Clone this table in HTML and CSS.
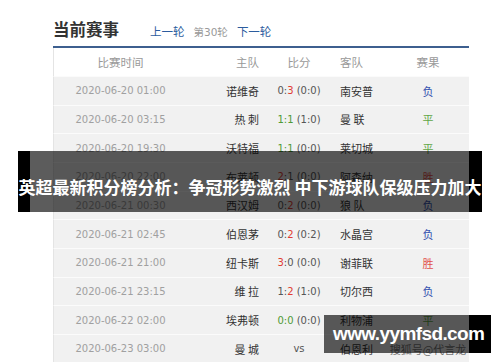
FILE: index.html
```html
<!DOCTYPE html>
<html lang="zh">
<head>
<meta charset="utf-8">
<link rel="stylesheet" href="styles.css">
</head>
<body>
<div class="page">
  <div class="head">
    <h2 class="title">当前赛事</h2>
    <nav class="rounds">
      <a class="link">上一轮</a>
      <span class="cur">第30轮</span>
      <a class="link">下一轮</a>
    </nav>
  </div>
  <div class="table">
    <div class="row thead">
      <div class="c-time">比赛时间</div>
      <div class="c-home">主队</div>
      <div class="c-score">比分</div>
      <div class="c-away">客队</div>
      <div class="c-res">赛果</div>
    </div>
    <div class="row">
      <div class="c-time">2020-06-20 01:00</div>
      <div class="c-home">诺维奇</div>
      <div class="c-score">0:<span class="r">3</span> (0:0)</div>
      <div class="c-away">南安普</div>
      <div class="c-res lose">负</div>
    </div>
    <div class="row">
      <div class="c-time">2020-06-20 03:15</div>
      <div class="c-home">热 刺</div>
      <div class="c-score"><span class="g">1:1</span> (1:0)</div>
      <div class="c-away">曼 联</div>
      <div class="c-res draw">平</div>
    </div>
    <div class="row">
      <div class="c-time">2020-06-20 19:30</div>
      <div class="c-home">沃特福</div>
      <div class="c-score"><span class="g">1:1</span> (0:0)</div>
      <div class="c-away">莱切城</div>
      <div class="c-res draw">平</div>
    </div>
    <div class="row">
      <div class="c-time">2020-06-20 22:00</div>
      <div class="c-home">布莱顿</div>
      <div class="c-score"><span class="r">2</span>:1 (0:0)</div>
      <div class="c-away">阿森纳</div>
      <div class="c-res win">胜</div>
    </div>
    <div class="row">
      <div class="c-time">2020-06-21 00:30</div>
      <div class="c-home">西汉姆</div>
      <div class="c-score">0:<span class="r">2</span> (0:0)</div>
      <div class="c-away">狼 队</div>
      <div class="c-res lose">负</div>
    </div>
    <div class="row">
      <div class="c-time">2020-06-21 02:45</div>
      <div class="c-home">伯恩茅</div>
      <div class="c-score">0:<span class="r">2</span> (0:2)</div>
      <div class="c-away">水晶宫</div>
      <div class="c-res lose">负</div>
    </div>
    <div class="row">
      <div class="c-time">2020-06-21 21:00</div>
      <div class="c-home">纽卡斯</div>
      <div class="c-score"><span class="r">3</span>:0 (0:0)</div>
      <div class="c-away">谢菲联</div>
      <div class="c-res win">胜</div>
    </div>
    <div class="row">
      <div class="c-time">2020-06-21 23:15</div>
      <div class="c-home">维 拉</div>
      <div class="c-score">1:<span class="r">2</span> (1:0)</div>
      <div class="c-away">切尔西</div>
      <div class="c-res lose">负</div>
    </div>
    <div class="row">
      <div class="c-time">2020-06-22 02:00</div>
      <div class="c-home">埃弗顿</div>
      <div class="c-score"><span class="g">0:0</span> (0:0)</div>
      <div class="c-away">利物浦</div>
      <div class="c-res draw">平</div>
    </div>
    <div class="row">
      <div class="c-time">2020-06-23 03:00</div>
      <div class="c-home">曼 城</div>
      <div class="c-score">vs</div>
      <div class="c-away">伯恩利</div>
      <div class="c-res mark">搜狐号@代言龙</div>
    </div>
  </div>
  <div class="banner">英超最新积分榜分析：争冠形势激烈 中下游球队保级压力加大</div>
  <div class="site">www.yymfsd.com</div>
</div>
</body>
</html>
```
FILE: styles.css
```css
html, body {
  margin: 0;
  padding: 0;
  background: #fff;
}
body {
  width: 500px;
  height: 362px;
  overflow: hidden;
  font-family: "DejaVu Sans", "Noto Sans CJK SC", sans-serif;
}
.page {
  position: relative;
  width: 500px;
  height: 362px;
  padding: 19px 0 0 53px;
  box-sizing: border-box;
}
.head {
  display: flex;
  align-items: baseline;
  height: 20px;
}
.title {
  margin: 0;
  font-family: "Noto Sans CJK SC", sans-serif;
  font-size: 16.5px;
  font-weight: 700;
  line-height: 20px;
  color: #333;
}
.rounds {
  display: flex;
  align-items: baseline;
  gap: 9px;
  margin-left: 31px;
  font-size: 11.5px;
}
.link {
  color: #2c5c9e;
  font-family: "Noto Sans CJK SC", sans-serif;
}
.cur {
  color: #999;
  font-family: "DejaVu Sans", "Noto Sans CJK SC", sans-serif;
  font-size: 10.5px;
}
.table {
  margin-top: 7px;
  width: 416px;
  border-top: 2px solid #3d5f8f;
}
.row {
  display: grid;
  grid-template-columns: 134px 71px 80px 47px 84px;
  align-items: center;
  height: 28.67px;
  box-sizing: border-box;
  background: #f1f1f1;
  border-left: 1px solid #e4e4e4;
  border-top: 1px solid #fbfbfb;
  font-family: "Noto Sans CJK SC", sans-serif;
  font-size: 11px;
  color: #333;
}
.row.thead {
  height: 28px;
  background: #fff;
  border-top: 0;
  color: #999;
  font-size: 11.5px;
}
.c-time {
  margin-left: -1px;
  text-align: center;
}
.row .c-time {
  font-family: "DejaVu Sans", sans-serif;
  font-size: 10px;
  color: #a0a0a0;
}
.row.thead .c-time {
  font-family: "Noto Sans CJK SC", sans-serif;
  font-size: 11.5px;
  color: #999;
}
.c-home {
  text-align: right;
}
.c-score {
  text-align: center;
  font-family: "DejaVu Sans", sans-serif;
  font-size: 10px;
  color: #555;
}
.row.thead .c-score {
  font-family: "Noto Sans CJK SC", sans-serif;
  font-size: 11.5px;
  color: #999;
}
.c-away {
  padding-left: 1px;
}
.c-res {
  text-align: center;
}
.r { color: #e03c31; }
.g { color: #4f9a35; }
.lose { color: #3553b0; }
.draw { color: #5fa645; }
.win { color: #e2504a; }
.mark {
  color: #777;
  font-size: 11px;
}
.banner {
  position: absolute;
  left: 18px;
  top: 151px;
  width: 464px;
  height: 61px;
  box-sizing: border-box;
  padding-top: 10px;
  line-height: 51px;
  background: linear-gradient(to right, #000 0 12px, rgba(0,0,0,0.64) 12px 451px, #000 451px);
  color: #fff;
  font-family: "Noto Sans CJK SC", sans-serif;
  font-size: 17px;
  font-weight: 700;
  white-space: nowrap;
  text-align: center;
  overflow: hidden;
}
.site {
  position: absolute;
  left: 324px;
  top: 315px;
  width: 167px;
  height: 38px;
  line-height: 38px;
  background: linear-gradient(to right, rgba(0,0,0,0.64) 0 145px, #000 145px);
  color: #fff;
  font-family: "Liberation Sans", sans-serif;
  font-size: 19px;
  font-weight: 700;
  letter-spacing: -0.6px;
  padding-left: 9px;
  box-sizing: border-box;
  white-space: nowrap;
}
```
